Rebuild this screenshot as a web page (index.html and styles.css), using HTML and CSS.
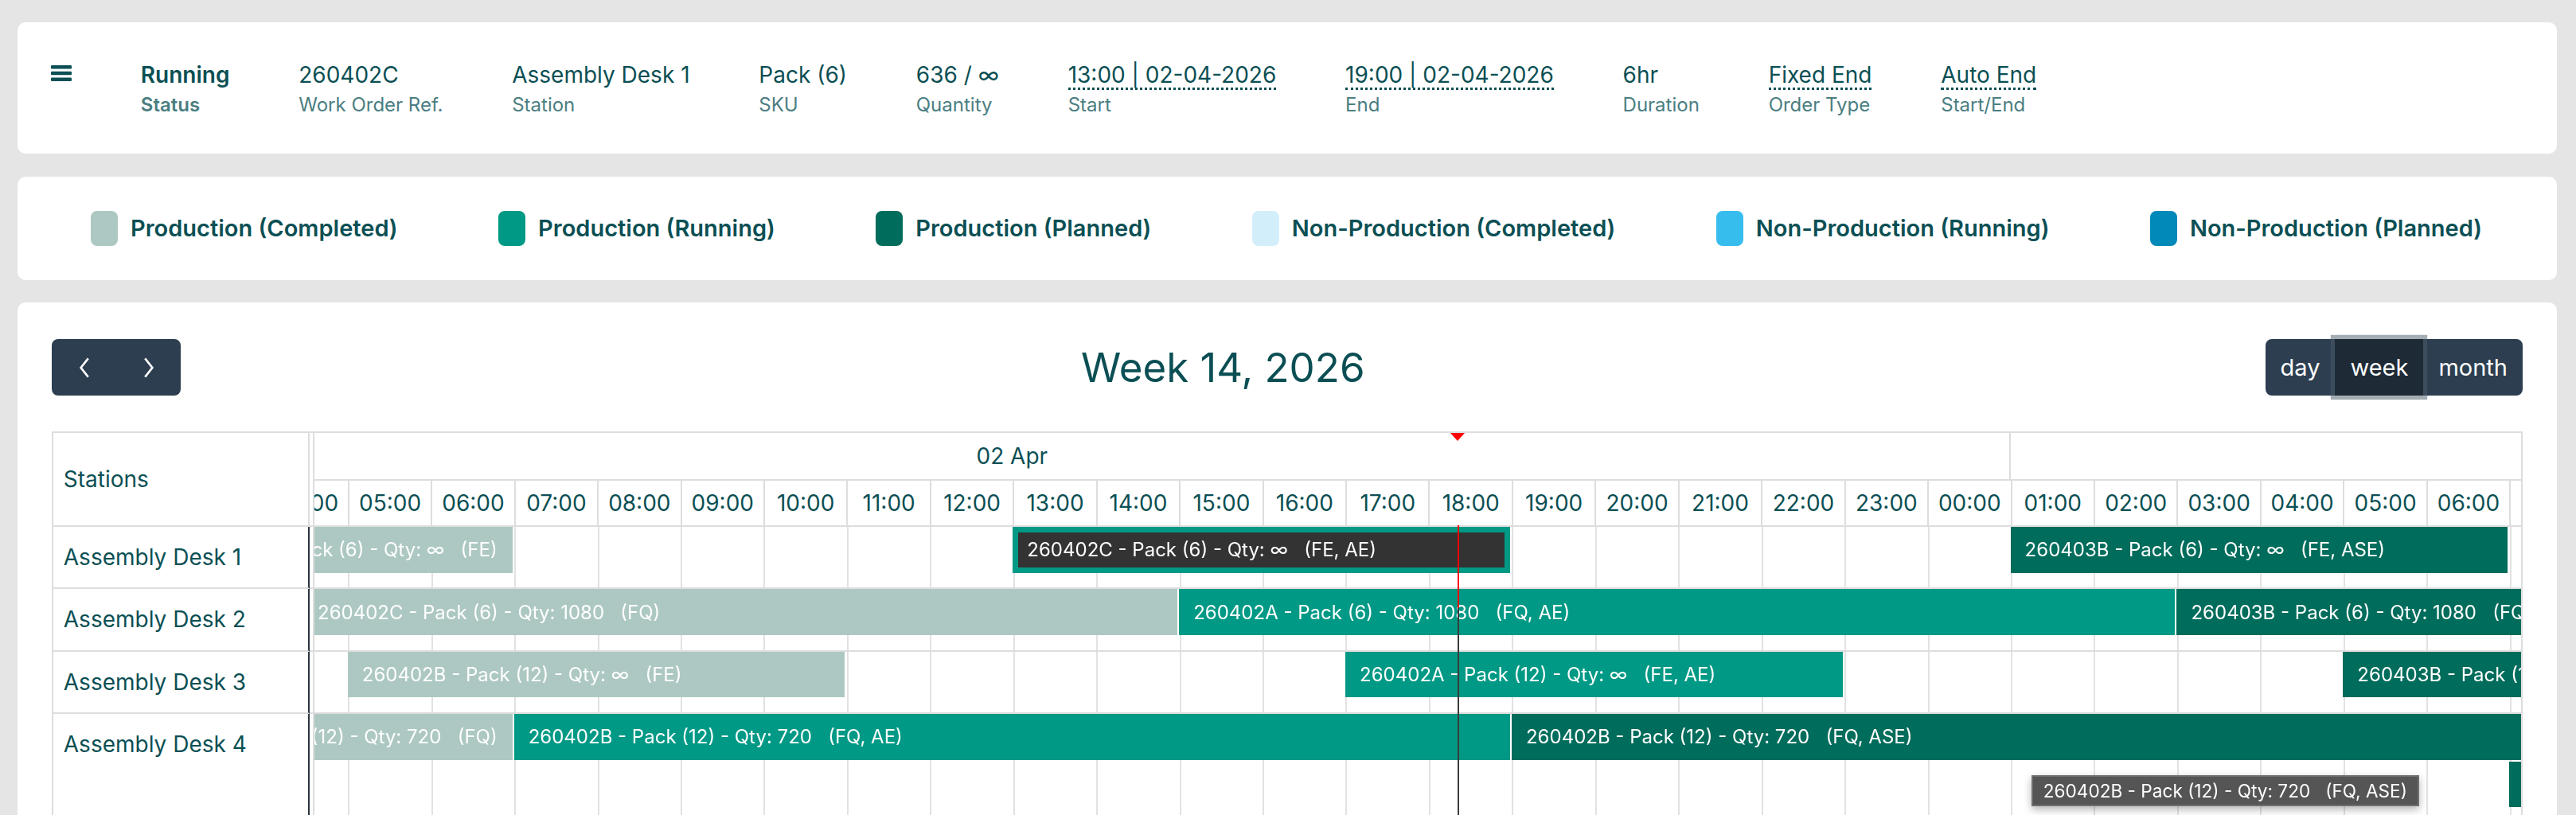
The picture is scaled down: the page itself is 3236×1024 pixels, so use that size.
FILE: index.html
```html
<!DOCTYPE html>
<html lang="en">
<head>
<meta charset="utf-8">
<title>Work Order Schedule</title>
<link rel="stylesheet" href="styles.css">
</head>
<body>
<div class="page">
  <header class="card info">
    <button class="menu" aria-label="Menu">
      <svg viewBox="0 0 13 10" width="13" height="10"><rect x="0" y="0" width="13" height="2.2" rx="0.6"/><rect x="0" y="3.9" width="13" height="2.2" rx="0.6"/><rect x="0" y="7.8" width="13" height="2.2" rx="0.6"/></svg>
    </button>
    <div class="field"><div class="val strong">Running</div><div class="lbl strong">Status</div></div>
    <div class="field"><div class="val">260402C</div><div class="lbl">Work Order Ref.</div></div>
    <div class="field"><div class="val">Assembly Desk 1</div><div class="lbl">Station</div></div>
    <div class="field"><div class="val">Pack (6)</div><div class="lbl">SKU</div></div>
    <div class="field"><div class="val">636 / ∞</div><div class="lbl">Quantity</div></div>
    <div class="field"><div class="val"><span class="dotted">13:00 | 02-04-2026</span></div><div class="lbl">Start</div></div>
    <div class="field"><div class="val"><span class="dotted">19:00 | 02-04-2026</span></div><div class="lbl">End</div></div>
    <div class="field"><div class="val">6hr</div><div class="lbl">Duration</div></div>
    <div class="field"><div class="val"><span class="dotted">Fixed End</span></div><div class="lbl">Order Type</div></div>
    <div class="field"><div class="val"><span class="dotted">Auto End</span></div><div class="lbl">Start/End</div></div>
  </header>

  <section class="card legend">
    <div class="li"><span class="sw prod-done"></span>Production (Completed)</div>
    <div class="li"><span class="sw prod-run"></span>Production (Running)</div>
    <div class="li"><span class="sw prod-plan"></span>Production (Planned)</div>
    <div class="li"><span class="sw np-done"></span>Non-Production (Completed)</div>
    <div class="li"><span class="sw np-run"></span>Non-Production (Running)</div>
    <div class="li"><span class="sw np-plan"></span>Non-Production (Planned)</div>
  </section>

  <section class="card calendar">
    <div class="toolbar">
      <div class="btn-group">
        <button class="btn nav" aria-label="Previous"><svg viewBox="0 0 8 14" width="8" height="14"><path d="M6.4 1.2 L1.8 7 L6.4 12.8"/></svg></button>
        <button class="btn nav" aria-label="Next"><svg viewBox="0 0 8 14" width="8" height="14"><path d="M1.6 1.2 L6.2 7 L1.6 12.8"/></svg></button>
      </div>
      <h2 class="title">Week 14, 2026</h2>
      <div class="btn-group">
        <button class="btn">day</button>
        <button class="btn active">week</button>
        <button class="btn">month</button>
      </div>
    </div>

    <div class="timeline">
      <div class="res-head">Stations</div>
      <div class="div-head"></div>
      <div class="hcell dates">
        <div class="track">
          <div class="day d-pre"></div>
          <div class="day">02 Apr</div>
          <div class="day">03 Apr</div>
        </div>
      </div>
      <div class="hcell slots">
        <div class="track">
          <div class="slot">00:00</div><div class="slot">01:00</div><div class="slot">02:00</div><div class="slot">03:00</div>
          <div class="slot">04:00</div><div class="slot">05:00</div><div class="slot">06:00</div><div class="slot">07:00</div>
          <div class="slot">08:00</div><div class="slot">09:00</div><div class="slot">10:00</div><div class="slot">11:00</div>
          <div class="slot">12:00</div><div class="slot">13:00</div><div class="slot">14:00</div><div class="slot">15:00</div>
          <div class="slot">16:00</div><div class="slot">17:00</div><div class="slot">18:00</div><div class="slot">19:00</div>
          <div class="slot">20:00</div><div class="slot">21:00</div><div class="slot">22:00</div><div class="slot">23:00</div>
          <div class="slot">00:00</div><div class="slot">01:00</div><div class="slot">02:00</div><div class="slot">03:00</div>
          <div class="slot">04:00</div><div class="slot">05:00</div><div class="slot">06:00</div><div class="slot">07:00</div>
        </div>
      </div>

      <div class="res">Assembly Desk 1</div>
      <div class="div-cell"></div>
      <div class="lane">
        <div class="track grid">
          <div class="ev done" style="--s:1;--e:7"><span class="t">260401C - Pack (6) - Qty: ∞   (FE)</span></div>
          <div class="ev run selected" style="--s:13;--e:19"><span class="t">260402C - Pack (6) - Qty: ∞   (FE, AE)</span></div>
          <div class="ev plan" style="--s:25;--e:31"><span class="t">260403B - Pack (6) - Qty: ∞   (FE, ASE)</span></div>
        </div>
      </div>

      <div class="res">Assembly Desk 2</div>
      <div class="div-cell"></div>
      <div class="lane">
        <div class="track grid">
          <div class="ev done" style="--s:0;--e:15"><span class="t">260402C - Pack (6) - Qty: 1080   (FQ)</span></div>
          <div class="ev run" style="--s:15;--e:27"><span class="t">260402A - Pack (6) - Qty: 1080   (FQ, AE)</span></div>
          <div class="ev plan" style="--s:27;--e:40"><span class="t">260403B - Pack (6) - Qty: 1080   (FQ, AE)</span></div>
        </div>
      </div>

      <div class="res">Assembly Desk 3</div>
      <div class="div-cell"></div>
      <div class="lane">
        <div class="track grid">
          <div class="ev done" style="--s:5;--e:11"><span class="t">260402B - Pack (12) - Qty: ∞   (FE)</span></div>
          <div class="ev run" style="--s:17;--e:23"><span class="t">260402A - Pack (12) - Qty: ∞   (FE, AE)</span></div>
          <div class="ev plan" style="--s:29;--e:35"><span class="t">260403B - Pack (12) - Qty: ∞   (FE, ASE)</span></div>
        </div>
      </div>

      <div class="res">Assembly Desk 4</div>
      <div class="div-cell"></div>
      <div class="lane">
        <div class="track grid">
          <div class="ev done" style="--s:1;--e:7"><span class="t">260401B - Pack (12) - Qty: 720   (FQ)</span></div>
          <div class="ev run" style="--s:7;--e:19"><span class="t">260402B - Pack (12) - Qty: 720   (FQ, AE)</span></div>
          <div class="ev plan" style="--s:19;--e:40"><span class="t">260402B - Pack (12) - Qty: 720   (FQ, ASE)</span></div>
          <div class="ev plan lvl2" style="--s:31;--e:40"><span class="t">260403A - Pack (12) - Qty: 720   (FQ, ASE)</span></div>
        </div>
      </div>

      <div class="now-arrow"></div>
      <div class="now-line"></div>
      <div class="tip">260402B - Pack (12) - Qty: 720   (FQ, ASE)</div>
    </div>
  </section>
</div>
</body>
</html>
```

FILE: styles.css
```css
html {
  zoom: 2;
  overflow: hidden;
}

* {
  box-sizing: border-box;
}

body {
  margin: 0;
  overflow: hidden;
  background: #e5e5e5;
  font-family: Inter, "Noto Sans", sans-serif;
  color: #0b4f54;
}

.page {
  padding: 14px 12px 0 11px;
  display: flex;
  flex-direction: column;
  gap: 14.25px;
}

.card {
  background: #fff;
  border-radius: 5px;
}

/* ---------- info bar ---------- */
.info {
  height: 82.5px;
  display: flex;
  align-items: flex-start;
  gap: 43.4px;
  padding: 25px 21px 0;
}

.menu {
  border: 0;
  background: none;
  padding: 0;
  margin-top: 1.8px;
  width: 13px;
  height: 10px;
  display: flex;
}

.menu svg {
  fill: #0b4f54;
}

.field {
  display: flex;
  flex-direction: column;
  gap: 3.5px;
}

.val {
  display: flex;
  font-size: 14px;
  line-height: 16px;
  color: #0b4f54;
  white-space: nowrap;
}

.lbl {
  font-size: 12px;
  line-height: 15px;
  color: #4a7e82;
  white-space: nowrap;
}

.strong {
  font-weight: 600;
}

.dotted {
  border-bottom: 1.5px dotted #0b4f54;
  margin-bottom: -1.5px;
}

/* ---------- legend ---------- */
.legend {
  height: 65px;
  display: flex;
  align-items: center;
  justify-content: space-between;
  padding: 0 47px 0 46px;
}

.li {
  display: flex;
  align-items: center;
  gap: 8px;
  font-size: 14.5px;
  font-weight: 600;
  color: #0b4f54;
  white-space: nowrap;
}

.sw {
  width: 17px;
  height: 22px;
  border-radius: 4px;
}

.prod-done { background: #adc8c2; }
.prod-run { background: #009985; }
.prod-plan { background: #006c5b; }
.np-done { background: #d3eefb; }
.np-run { background: #37bcee; }
.np-plan { background: #0089b9; }

/* ---------- calendar ---------- */
.calendar {
  padding: 23px 21.5px 0;
}

.toolbar {
  height: 35.5px;
  display: flex;
  align-items: center;
  justify-content: space-between;
  margin-bottom: 22.5px;
}

.title {
  margin: 0;
  font-size: 25.5px;
  font-weight: 400;
  color: #0b4f54;
}

.btn-group {
  display: flex;
  height: 35.5px;
}

.btn {
  position: relative;
  height: 35.5px;
  padding: 0 8.5px;
  border: 1px solid #2c3e50;
  background: #2c3e50;
  color: #fff;
  font-family: Inter, "Noto Sans", sans-serif;
  font-size: 14.5px;
  display: flex;
  align-items: center;
  justify-content: center;
}

.btn:first-child {
  border-radius: 4px 0 0 4px;
}

.btn:last-child {
  border-radius: 0 4px 4px 0;
}

.btn.nav {
  width: 40.5px;
}

.btn.nav svg {
  fill: none;
  stroke: #fff;
  stroke-width: 1.3;
}

.btn.active {
  background: #1e2b37;
  border-color: #1e2b37;
  box-shadow: 0 0 0 2.6px rgba(76, 91, 106, 0.5);
  z-index: 1;
}

/* ---------- timeline ---------- */
.timeline {
  --slot: 52.22px;
  position: relative;
  display: grid;
  grid-template-columns: 161px 3px 1fr;
  grid-template-rows: 30px 29px 39.2px 39.2px 39.2px 72px;
  border: 1px solid #ddd;
  border-bottom: 0;
}

.res-head {
  grid-row: 1 / 3;
  grid-column: 1;
  display: flex;
  align-items: center;
  padding-left: 6.4px;
  font-size: 14px;
  border-right: 1px solid #ddd;
  border-bottom: 1px solid #ddd;
}

.div-head {
  grid-row: 1 / 3;
  grid-column: 2;
  border-right: 1px solid #ddd;
  border-bottom: 1px solid #ddd;
}

.hcell {
  grid-column: 3;
  overflow: hidden;
  border-bottom: 1px solid #ddd;
}

.dates { grid-row: 1; }
.slots { grid-row: 2; }

.track {
  position: relative;
  display: flex;
  height: 100%;
  width: 2600px;
  margin-left: -240.2px;
}

.day {
  flex: none;
  width: calc(var(--slot) * 24);
  border-right: 1px solid #ddd;
  text-align: center;
  font-size: 14px;
  line-height: 29px;
}

.day.d-pre {
  width: var(--slot);
}

.slot {
  flex: none;
  width: var(--slot);
  border-left: 1px solid #ddd;
  text-align: center;
  font-size: 14px;
  line-height: 28px;
  white-space: nowrap;
}

.res {
  padding: 10.5px 6.4px 0;
  font-size: 14px;
  line-height: 17px;
  border-right: 1px solid #2b3540;
  border-bottom: 1px solid #ddd;
  white-space: nowrap;
}

.div-cell {
  border-right: 1px solid #ddd;
  border-bottom: 1px solid #ddd;
}

.lane {
  overflow: hidden;
  border-bottom: 1px solid #ddd;
}

.track.grid {
  display: block;
  background-image: repeating-linear-gradient(90deg, #e2e2e2 0 1px, transparent 1px var(--slot));
}

.ev {
  position: absolute;
  top: 0;
  height: 28.8px;
  left: calc(var(--s) * var(--slot));
  width: calc((var(--e) - var(--s)) * var(--slot) - 1px);
  display: flex;
  align-items: center;
  padding: 0 7.5px 0 7px;
  color: #fff;
  font-size: 12px;
}

.ev .t {
  position: sticky;
  left: 0;
  flex: none;
  padding: 0 2px;
  white-space: pre;
}

.ev.lvl2 {
  top: 29.8px;
}

.ev.done { background: #adc8c2; }
.ev.run { background: #009985; }
.ev.plan { background: #006c5b; }

.ev.selected {
  background: #333;
  box-shadow: inset 0 0 0 3.5px #009985;
}

.now-arrow {
  position: absolute;
  left: 877.4px;
  top: 0;
  width: 0;
  height: 0;
  border-left: 4.5px solid transparent;
  border-right: 4.5px solid transparent;
  border-top: 5px solid #f00;
  z-index: 4;
}

.now-line {
  position: absolute;
  left: 881.9px;
  top: 58px;
  bottom: 0;
  width: 1px;
  background: linear-gradient(#f00 0 52px, #3a3a3a 52px);
  z-index: 4;
}

.tip {
  position: absolute;
  left: 1242.4px;
  top: 215px;
  height: 19.5px;
  padding: 0 6.5px;
  background: #555;
  border: 1px solid #6e6e6e;
  color: #fff;
  font-size: 11.3px;
  line-height: 17.5px;
  white-space: pre;
  box-shadow: 0 2px 5px rgba(0, 0, 0, 0.3);
  z-index: 5;
}
```
